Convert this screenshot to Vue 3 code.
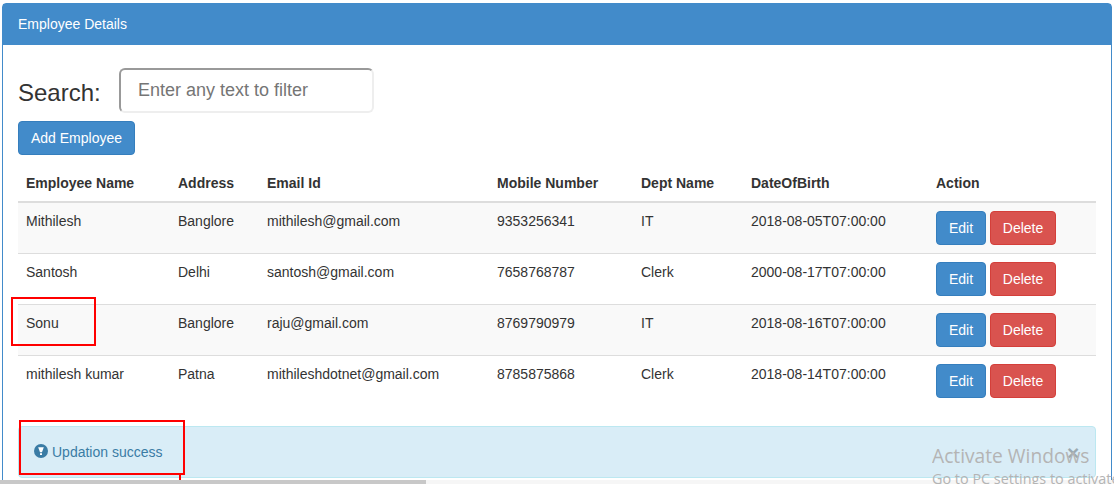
<script setup>
const rows = [
  ['Mithilesh', 'Banglore', 'mithilesh@gmail.com', '9353256341', 'IT', '2018-08-05T07:00:00'],
  ['Santosh', 'Delhi', 'santosh@gmail.com', '7658768787', 'Clerk', '2000-08-17T07:00:00'],
  ['Sonu', 'Banglore', 'raju@gmail.com', '8769790979', 'IT', '2018-08-16T07:00:00'],
  ['mithilesh kumar', 'Patna', 'mithileshdotnet@gmail.com', '8785875868', 'Clerk', '2018-08-14T07:00:00']
]
const heads = ['Employee Name', 'Address', 'Email Id', 'Mobile Number', 'Dept Name', 'DateOfBirth', 'Action']
const widths = [152, 89, 230, 144, 110, 185, 168]
</script>

<template>
  <div class="page">
    <section class="panel">
      <header class="panel-heading">Employee Details</header>
      <div class="panel-body">
        <div class="search">
          <label class="search-label">Search:</label>
          <input class="search-input" type="text" placeholder="Enter any text to filter" />
        </div>
        <button class="btn btn-primary add">Add Employee</button>
        <table class="table">
          <colgroup>
            <col v-for="w in widths" :key="w" :style="{ width: w + 'px' }" />
          </colgroup>
          <thead>
            <tr><th v-for="h in heads" :key="h">{{ h }}</th></tr>
          </thead>
          <tbody>
            <tr v-for="r in rows" :key="r[0]">
              <td v-for="c in r" :key="c">{{ c }}</td>
              <td class="actions">
                <button class="btn btn-primary edit">Edit</button>
                <button class="btn btn-danger">Delete</button>
              </td>
            </tr>
          </tbody>
        </table>
        <div class="alert">
          <svg class="alert-icon" viewBox="0 0 14 14" width="14" height="14">
            <circle cx="7" cy="7" r="7" fill="#3a7ca5" />
            <path d="M4.2 3.2h5.6L8 8.2H6z" fill="#fff" />
            <rect x="6" y="9.2" width="2" height="1.8" fill="#fff" />
          </svg>
          <span>Updation success</span>
        </div>
      </div>
    </section>

    <div class="mark mark-one"></div>
    <div class="mark mark-two"></div>
    <div class="mark mark-tick"></div>
    <div class="scrollbar"><div class="thumb"></div></div>
    <span class="close">×</span>
    <div class="watermark">
      <div class="wm-title">Activate Windows</div>
      <div class="wm-sub">Go to PC settings to activate Windows.</div>
    </div>
  </div>
</template>

<style>
html, body { margin: 0; height: 100%; overflow: hidden; background: #fff; }
</style>

<style scoped>
.page {
  position: relative;
  width: 1114px;
  height: 484px;
  overflow: hidden;
  padding: 3px 2px 0;
  box-sizing: border-box;
  font-family: "Liberation Sans", Arial, sans-serif;
  font-size: 14px;
  line-height: 20px;
  color: #333;
}
.panel {
  border: 1px solid #428bca;
  border-radius: 4px;
  background: #fff;
}
.panel-heading {
  background: #428bca;
  color: #fff;
  padding: 10px 15px;
  height: 41px;
  box-sizing: border-box;
}
.panel-body { padding: 23px 15px 15px; }
.search { display: flex; align-items: flex-start; height: 45px; }
.search-label {
  font-size: 24px;
  line-height: 26px;
  margin-top: 12px;
  width: 101px;
}
.search-input {
  width: 255px;
  height: 45px;
  box-sizing: border-box;
  padding: 0 17px;
  font: 18px "Liberation Sans", Arial, sans-serif;
  border: 2px solid #eee;
  border-top-color: #999;
  border-left-color: #999;
  border-radius: 6px;
  outline: none;
}
.search-input::placeholder { color: #757575; opacity: 1; }
.btn {
  display: inline-block;
  box-sizing: border-box;
  height: 34px;
  padding: 6px 0;
  font: 14px/20px "Liberation Sans", Arial, sans-serif;
  color: #fff;
  border: 1px solid transparent;
  border-radius: 4px;
  margin: 0;
  text-align: center;
}
.btn-primary { background: #428bca; border-color: #357ebd; }
.edit { width: 50px; }
.btn-danger { background: #d9534f; border-color: #d43f3a; margin-left: 4px; width: 66px; }
.add { display: block; margin-top: 8px; width: 117px; }
.table {
  width: 1078px;
  table-layout: fixed;
  border-collapse: collapse;
  margin-top: 1px;
}
th {
  text-align: left;
  padding: 8px;
  height: 46px;
  box-sizing: border-box;
  vertical-align: bottom;
  border-bottom: 2px solid #ddd;
  font-weight: 700;
}
td {
  padding: 8px;
  vertical-align: top;
  border-top: 1px solid #ddd;
}
tbody tr:first-child td { border-top: 0; }
tbody tr:nth-child(odd) td { background: #f9f9f9; }
.actions { white-space: nowrap; font-size: 0; }
.alert {
  display: flex;
  align-items: center;
  gap: 4px;
  box-sizing: border-box;
  height: 52px;
  margin-top: 20px;
  padding: 0 15px;
  background: #d9edf7;
  border: 1px solid #bce8f1;
  border-radius: 4px;
  color: #3a7ca5;
}
.alert-icon { flex: none; margin-top: -2px; }
.mark {
  position: absolute;
  box-sizing: border-box;
  border: 2px solid #f00;
}
.mark-one { left: 11px; top: 297px; width: 85px; height: 49px; }
.mark-two { left: 19px; top: 420px; width: 166px; height: 55px; }
.mark-tick { left: 179px; top: 475px; width: 2px; height: 5px; border: 0; background: #f00; }
.close {
  position: absolute;
  left: 1067px;
  top: 442px;
  font-size: 21px;
  font-weight: 700;
  line-height: 21px;
  color: #000;
  opacity: 0.28;
}
.watermark {
  position: absolute;
  left: 932px;
  top: 443px;
  width: 182px;
  height: 41px;
  overflow: hidden;
  white-space: nowrap;
  color: #b4b4b4;
  font-family: "Open Sans", "Noto Sans", sans-serif;
}
.wm-title { font-size: 19.2px; line-height: 25px; }
.wm-sub { font-size: 14.4px; line-height: 20px; margin-top: 1px; }
.scrollbar {
  position: absolute;
  left: 0;
  right: 0;
  bottom: 0;
  height: 4px;
  background: #f6f6f6;
}
.thumb { width: 426px; height: 100%; background: #c8c8c8; }
</style>
